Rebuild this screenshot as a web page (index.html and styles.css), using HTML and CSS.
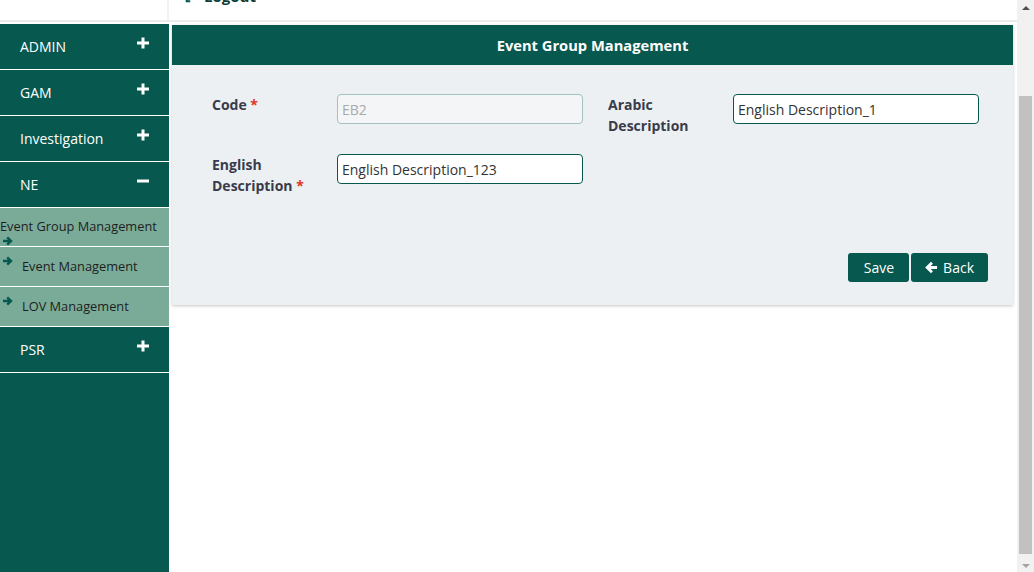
FILE: index.html
```html
<!DOCTYPE html>
<html lang="en">
<head>
<meta charset="utf-8">
<title>Event Group Management</title>
<link rel="stylesheet" href="styles.css">
</head>
<body>
<div class="screen">
  <div class="viewport">
    <header class="topbar">
      <div class="topbar-left"></div>
      <div class="topbar-right">
        <a class="logout" href="#">
          <svg class="logout-icon" viewBox="0 0 16 16" width="14" height="14"><path d="M6 2H2v12h4" fill="none" stroke="currentColor" stroke-width="2.4"/><path d="M6 8h8M11 4.5 14.5 8 11 11.5" fill="none" stroke="currentColor" stroke-width="2.4"/></svg>
          Logout
        </a>
      </div>
    </header>
    <div class="layout">
      <nav class="sidebar">
        <div class="menu-item"><span>ADMIN</span><svg class="toggle" viewBox="0 0 12 12" width="12" height="12"><path d="M0 6h12M6 0.5v11" stroke="currentColor" stroke-width="3"/></svg></div>
        <div class="menu-item"><span>GAM</span><svg class="toggle" viewBox="0 0 12 12" width="12" height="12"><path d="M0 6h12M6 0.5v11" stroke="currentColor" stroke-width="3"/></svg></div>
        <div class="menu-item"><span>Investigation</span><svg class="toggle" viewBox="0 0 12 12" width="12" height="12"><path d="M0 6h12M6 0.5v11" stroke="currentColor" stroke-width="3"/></svg></div>
        <div class="menu-item"><span>NE</span><svg class="toggle minus" viewBox="0 0 12 12" width="12" height="12"><path d="M0 6h12" stroke="currentColor" stroke-width="3"/></svg></div>
        <div class="sub-item sub-active">
          <span class="sub-text">Event Group Management</span>
          <svg class="arrow" viewBox="0 0 10 10" width="10" height="10"><path d="M0 5h7.5M4.2 1.4 8 5 4.2 8.6" fill="none" stroke="currentColor" stroke-width="2.4"/></svg>
        </div>
        <div class="sub-item">
          <svg class="arrow" viewBox="0 0 10 10" width="10" height="10"><path d="M0 5h7.5M4.2 1.4 8 5 4.2 8.6" fill="none" stroke="currentColor" stroke-width="2.4"/></svg>
          <span class="sub-text">Event Management</span>
        </div>
        <div class="sub-item">
          <svg class="arrow" viewBox="0 0 10 10" width="10" height="10"><path d="M0 5h7.5M4.2 1.4 8 5 4.2 8.6" fill="none" stroke="currentColor" stroke-width="2.4"/></svg>
          <span class="sub-text">LOV Management</span>
        </div>
        <div class="menu-item"><span>PSR</span><svg class="toggle" viewBox="0 0 12 12" width="12" height="12"><path d="M0 6h12M6 0.5v11" stroke="currentColor" stroke-width="3"/></svg></div>
      </nav>
      <main class="content">
        <section class="card">
          <div class="card-header">Event Group Management</div>
          <div class="card-body">
            <div class="form-grid">
              <div class="field">
                <label class="field-label">Code <span class="req">*</span></label>
                <input class="field-input" type="text" value="EB2" disabled>
              </div>
              <div class="field">
                <label class="field-label">Arabic Description</label>
                <input class="field-input" type="text" value="English Description_1">
              </div>
              <div class="field">
                <label class="field-label">English Description <span class="req">*</span></label>
                <input class="field-input" type="text" value="English Description_123">
              </div>
            </div>
            <div class="actions">
              <button class="btn btn-save" type="button">Save</button>
              <button class="btn btn-back" type="button"><svg class="back-icon" viewBox="0 0 14 14" width="13" height="13"><path d="M13 7H3M7.5 1.8 2.3 7l5.2 5.2" fill="none" stroke="currentColor" stroke-width="3"/></svg>Back</button>
            </div>
          </div>
        </section>
      </main>
    </div>
  </div>
  <div class="scrollbar">
    <div class="sb-arrow sb-up"></div>
    <div class="sb-track"><div class="sb-thumb"></div></div>
    <div class="sb-arrow sb-down"></div>
  </div>
</div>
</body>
</html>
```

FILE: styles.css
```css
* { box-sizing: border-box; }

html, body {
  margin: 0;
  padding: 0;
  height: 572px;
  overflow: hidden;
  background: #ffffff;
  font-family: "Open Sans", "Noto Sans", "Liberation Sans", sans-serif;
}

.screen {
  display: flex;
  width: 1034px;
  height: 572px;
}

.viewport {
  flex: 1;
  display: flex;
  flex-direction: column;
  min-width: 0;
}

/* top bar (page scrolled: only bottom of it visible) */
.topbar {
  display: flex;
  height: 22px;
  border-bottom: 2px solid #ececec;
  flex-shrink: 0;
}

.topbar-left {
  width: 169px;
  border-right: 2px solid #f2f2f2;
}

.topbar-right {
  flex: 1;
  padding-left: 16px;
  overflow: hidden;
}

.logout {
  display: flex;
  align-items: center;
  gap: 5px;
  margin-top: -14px;
  color: #0d3b35;
  font-size: 15px;
  font-weight: 700;
  line-height: 20px;
  text-decoration: none;
}

.logout-icon { color: #07584f; }

.layout {
  flex: 1;
  display: flex;
  padding-top: 2px;
  min-height: 0;
}

/* sidebar */
.sidebar {
  width: 169px;
  flex-shrink: 0;
  background: #07584f;
  display: flex;
  flex-direction: column;
}

.menu-item {
  height: 46px;
  flex-shrink: 0;
  border-bottom: 1px solid #ffffff;
  display: flex;
  justify-content: space-between;
  align-items: flex-start;
  padding: 0 20px 0 20px;
  color: #ffffff;
  font-size: 14px;
  line-height: 20px;
}

.menu-item span { padding-top: 13px; }

.toggle {
  margin-top: 13px;
  color: #ffffff;
}

.sub-item {
  height: 40px;
  flex-shrink: 0;
  border-bottom: 1px solid #ffffff;
  background: #7aab98;
  display: flex;
  align-items: flex-start;
  gap: 9px;
  padding: 0 0 0 3px;
  color: #1e1e1e;
  font-size: 12.8px;
  line-height: 18px;
}

.sub-item .sub-text { padding-top: 10px; }

.sub-item .arrow {
  margin-top: 9px;
  color: #07584f;
  flex-shrink: 0;
}

.sub-active {
  height: 39px;
  flex-direction: column;
  gap: 0;
  padding-left: 0;
  overflow: visible;
}

.sub-active .sub-text { padding-top: 9px; }

.sub-active .arrow {
  margin-top: 1px;
  margin-left: 3px;
  position: relative;
  z-index: 1;
}

/* content */
.content {
  flex: 1;
  padding: 1px 4px 0 3px;
  min-width: 0;
}

.card {
  background: #ecf0f3;
  box-shadow: 0 1px 3px rgba(0, 0, 0, 0.22);
}

.card-header {
  height: 40px;
  background: #07584f;
  color: #ffffff;
  font-weight: 700;
  font-size: 14.7px;
  line-height: 41px;
  text-align: center;
}

.card-body {
  padding: 29px 25px 23px 40px;
}

.form-grid {
  display: grid;
  grid-template-columns: 371px 371px;
  column-gap: 25px;
  row-gap: 18px;
}

.field {
  display: grid;
  grid-template-columns: 125px 246px;
  align-items: start;
  min-height: 42px;
}

.field-label {
  font-size: 14px;
  font-weight: 700;
  line-height: 21px;
  color: #3a3b4a;
  padding-right: 14px;
}

.req { color: #e0352b; }

.field-input {
  height: 30px;
  width: 246px;
  border: 1px solid #07584f;
  border-radius: 4px;
  background: #ffffff;
  padding: 0 4px;
  font-family: inherit;
  font-size: 14px;
  color: #333333;
}

.field-input:disabled {
  background: #f3f5f7;
  border-color: #a3c2b9;
  color: #aaaaaa;
}

.actions {
  display: flex;
  justify-content: flex-end;
  gap: 2px;
  margin-top: 57px;
}

.btn {
  height: 29px;
  padding: 0 14px;
  border: none;
  border-radius: 3px;
  background: #07584f;
  color: #ffffff;
  font-family: inherit;
  font-size: 14px;
  display: flex;
  align-items: center;
  gap: 5px;
}

.btn-save { padding: 0 15px 0 16px; }

.btn-back { padding: 0 14px 0 14px; gap: 5px; }

/* fake scrollbar (screenshot was taken scrolled) */
.scrollbar {
  width: 17px;
  flex-shrink: 0;
  background: #f1f1f1;
  display: flex;
  flex-direction: column;
  align-items: center;
}

.sb-arrow {
  width: 0;
  height: 0;
  border-left: 4px solid transparent;
  border-right: 4px solid transparent;
}

.sb-up {
  margin-top: 6px;
  border-bottom: 4px solid #505050;
}

.sb-down {
  margin: 5px 0 4px;
  border-top: 4px solid #a3a3a3;
}

.sb-track {
  flex: 1;
  width: 100%;
  padding: 86px 2px 0 2px;
}

.sb-thumb {
  height: 458px;
  background: #c1c1c1;
}
```
